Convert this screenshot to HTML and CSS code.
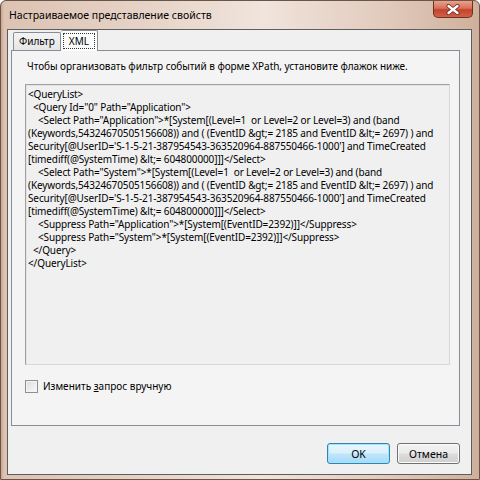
FILE: index.html
```html
<!DOCTYPE html>
<html lang="ru">
<head>
  <meta charset="UTF-8">
  <title>Настраиваемое представление свойств</title>
  <link rel="stylesheet" href="styles.css">
</head>
<body>
  <div class="window">
    <!-- заголовок окна -->
    <div class="titlebar">
      <span class="title">Настраиваемое представление свойств</span>
      <div class="close">
        <svg width="16" height="11" viewBox="0 0 16 11">
          <path d="M3.5 2 L12.5 9 M12.5 2 L3.5 9" stroke="#6a2418" stroke-width="4" stroke-linecap="round"/>
          <path d="M3.5 2 L12.5 9 M12.5 2 L3.5 9" stroke="#fff" stroke-width="2.4" stroke-linecap="round"/>
        </svg>
      </div>
    </div>

    <div class="client">
      <!-- вкладки -->
      <div class="tabs">
        <div class="tab">Фильтр</div>
        <div class="tab active"><span class="focus">XML</span></div>
      </div>

      <div class="panel">
        <div class="hint">Чтобы организовать фильтр событий в форме XPath, установите флажок ниже.</div>
        <div class="query">&lt;QueryList&gt;
  &lt;Query Id="0" Path="Application"&gt;
    &lt;Select Path="Application"&gt;*[System[(Level=1  or Level=2 or Level=3) and (band
(Keywords,54324670505156608)) and ( (EventID &amp;gt;= 2185 and EventID &amp;lt;= 2697) ) and
Security[@UserID='S-1-5-21-387954543-363520964-887550466-1000'] and TimeCreated
[timediff(@SystemTime) &amp;lt;= 604800000]]]&lt;/Select&gt;
    &lt;Select Path="System"&gt;*[System[(Level=1  or Level=2 or Level=3) and (band
(Keywords,54324670505156608)) and ( (EventID &amp;gt;= 2185 and EventID &amp;lt;= 2697) ) and
Security[@UserID='S-1-5-21-387954543-363520964-887550466-1000'] and TimeCreated
[timediff(@SystemTime) &amp;lt;= 604800000]]]&lt;/Select&gt;
    &lt;Suppress Path="Application"&gt;*[System[(EventID=2392)]]&lt;/Suppress&gt;
    &lt;Suppress Path="System"&gt;*[System[(EventID=2392)]]&lt;/Suppress&gt;
  &lt;/Query&gt;
&lt;/QueryList&gt;</div>
        <label class="check">
          <span class="box"></span>
          <span>Изменить <u>з</u>апрос вручную</span>
        </label>
      </div>

      <!-- кнопки -->
      <div class="footer">
        <button class="btn default">OK</button>
        <button class="btn">Отмена</button>
      </div>
    </div>
  </div>
</body>
</html>
```

FILE: styles.css
```css
body {
  margin: 0;
  font-family: "Noto Sans", "Open Sans", sans-serif;
  font-size: 10px;
  color: #000;
}

.window {
  width: 480px;
  height: 480px;
  box-sizing: border-box;
  display: flex;
  flex-direction: column;
  padding: 0 7px 4px 6px;
  border: 1px solid #6b5547;
  border-radius: 6px 6px 0 0;
  background: linear-gradient(90deg, #c9a58e 0, #dcc3b3 3px, #e6d3c7 30%, #f0e4dc 55%, #e2cbbd 80%, #cfb09c 100%);
}

.titlebar {
  height: 28px;
  display: flex;
  padding-left: 2px;
}

.title {
  font-size: 10.5px;
  line-height: 28px;
}

.close {
  margin-left: auto;
  margin-right: -1px;
  width: 40px;
  height: 17px;
  box-sizing: border-box;
  border: 1px solid #6e3020;
  border-top: none;
  border-radius: 0 0 5px 5px;
  background: linear-gradient(#e9a28c 0, #d8705a 45%, #c3432c 55%, #d2604a 100%);
  display: flex;
  align-items: center;
  justify-content: center;
}

.client {
  flex: 1;
  display: flex;
  flex-direction: column;
  border: 1px solid #5e5e5e;
  background: #f0f0f0;
}

.tabs {
  height: 20px;
  display: flex;
  align-items: flex-end;
  padding-left: 5px;
  position: relative;
  z-index: 1;
}

.tab {
  height: 18px;
  box-sizing: border-box;
  padding: 0 5px;
  line-height: 16px;
  border: 1px solid #898c95;
  border-bottom: none;
  border-radius: 2px 2px 0 0;
  background: linear-gradient(#f3f3f3, #e6e6e6);
}

.tab.active {
  height: 21px;
  margin-bottom: -1px;
  padding: 2px 2px 0;
  background: #fcfcfc;
  border-left: none;
}

.focus {
  display: block;
  padding: 0 5px;
  line-height: 14px;
  border: 1px dotted #333;
}

.panel {
  margin: 0 11px 0 3px;
  height: 376px;
  box-sizing: border-box;
  border: 1px solid #898c95;
  background: #f4f4f4;
  padding: 8px 9px 0 13px;
}

.hint {
  line-height: 15px;
  padding-left: 2px;
  letter-spacing: -0.05px;
}

.query {
  margin-top: 10px;
  height: 281px;
  box-sizing: border-box;
  border: 1px solid #a0a0a0;
  border-right-color: #d8d8d8;
  border-bottom-color: #d8d8d8;
  box-shadow: inset 1px 1px 0 #e3e3e3;
  padding: 3px 2px;
  white-space: pre;
  overflow: hidden;
  line-height: 13px;
  letter-spacing: -0.12px;
  background: #f0f0f0;
}

.check {
  margin-top: 14px;
  display: flex;
  align-items: center;
  gap: 5px;
  line-height: 15px;
}

.box {
  width: 11px;
  height: 11px;
  border: 1px solid #8e8f8f;
  background: linear-gradient(135deg, #dcdcdc, #fbfbfb);
  box-shadow: inset 0 0 0 1px #f4f4f4;
}

.check u {
  text-decoration-thickness: 1px;
}

.footer {
  display: flex;
  justify-content: flex-end;
  gap: 7px;
  padding: 17px 11px 0 0;
}

.btn {
  width: 63px;
  height: 21px;
  font-family: "Noto Sans", "Open Sans", sans-serif;
  font-size: 10.5px;
  padding: 0;
  border: 1px solid #707070;
  border-radius: 3px;
  background: linear-gradient(#f2f2f2 0, #ebebeb 48%, #dddddd 52%, #cfcfcf 100%);
  box-shadow: inset 0 0 0 1px #fcfcfc;
  color: #000;
}

.btn.default {
  border-color: #3c7fb1;
  background: linear-gradient(#eaf6fd 0, #d9f0fc 48%, #bee6fd 52%, #a7d9f5 100%);
  box-shadow: inset 0 0 0 1px #97e9ff;
}
```
